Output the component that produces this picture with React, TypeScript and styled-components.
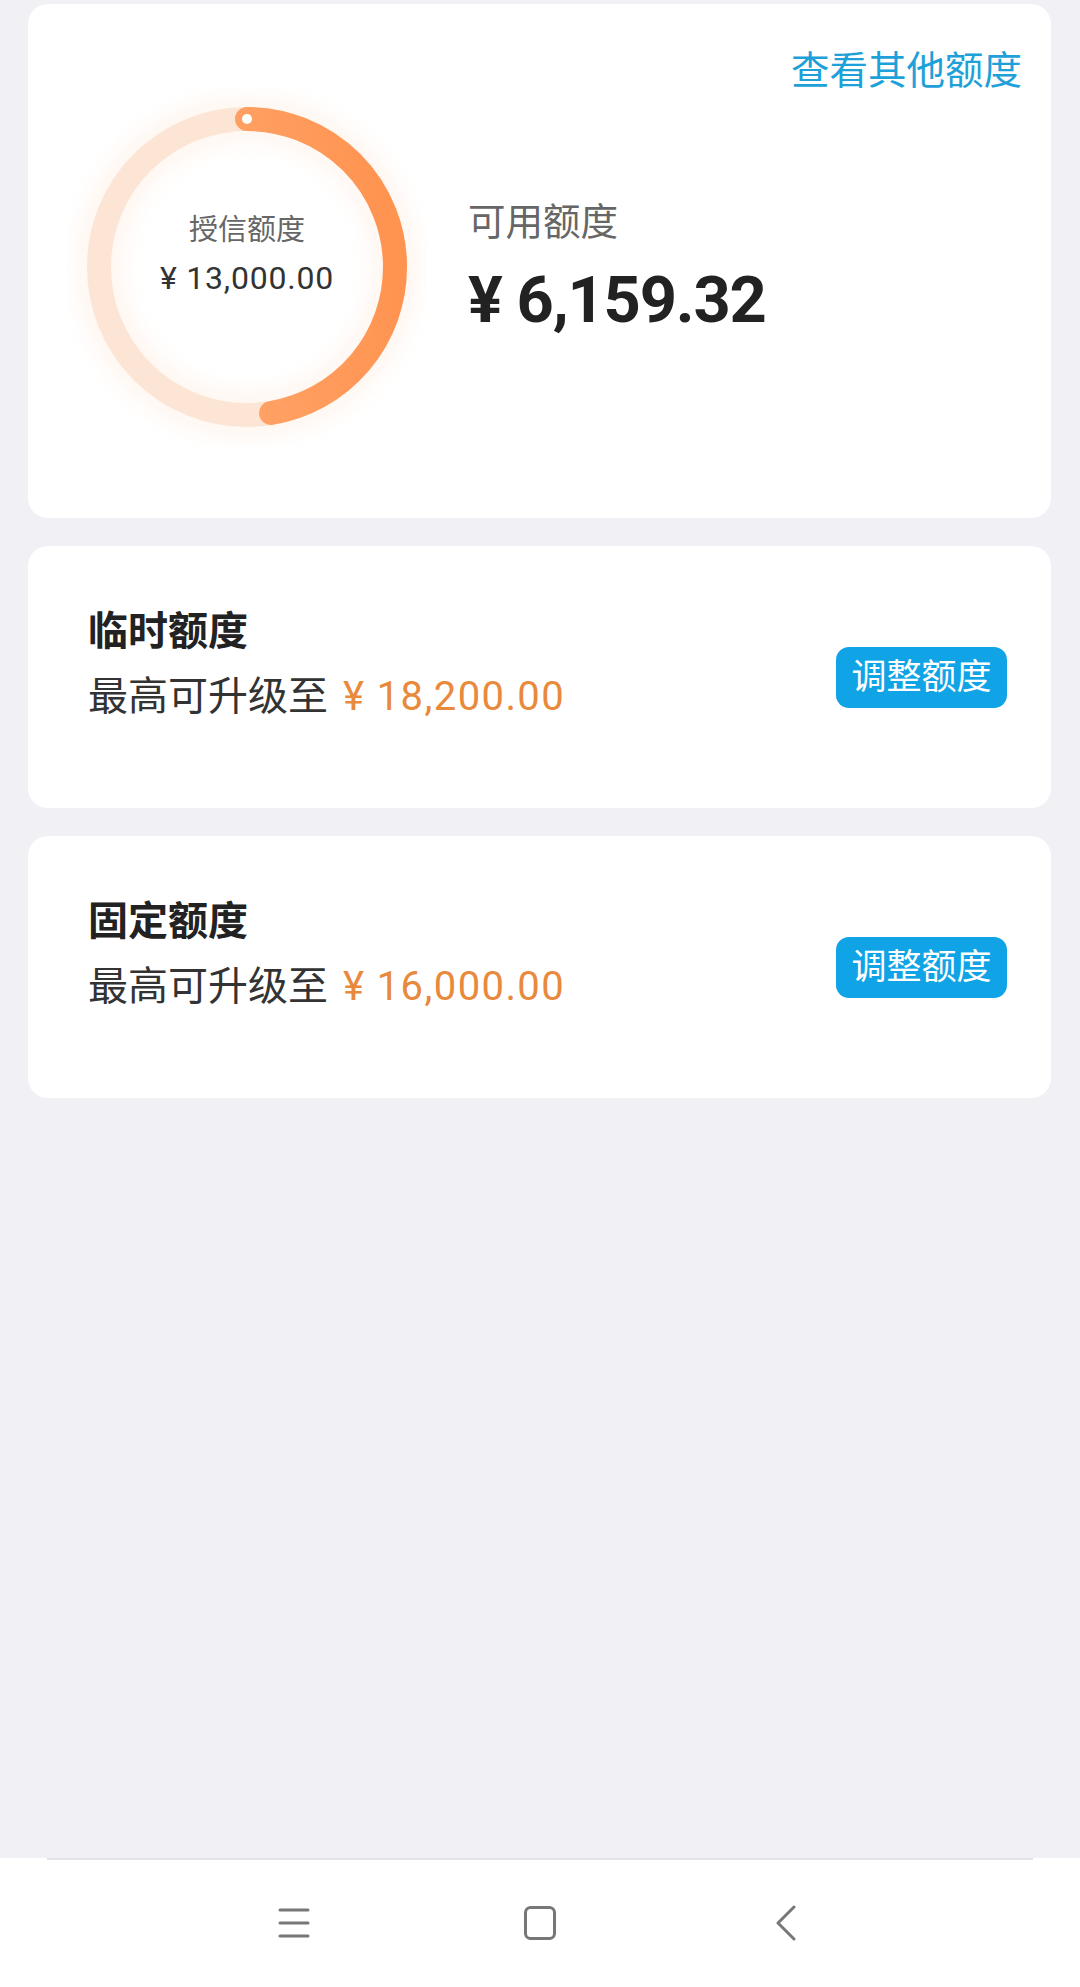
import React from "react";
import styled, { createGlobalStyle } from "styled-components";

const GlobalStyle = createGlobalStyle`
  html, body {
    margin: 0;
    padding: 0;
    background: #f0f0f5;
  }
  body {
    font-family: Roboto, "Noto Sans CJK SC", "Noto Sans", sans-serif;
    -webkit-font-smoothing: antialiased;
  }
  * { box-sizing: border-box; }
`;

const Screen = styled.div`
  min-height: 1987px;
  display: flex;
  flex-direction: column;
  background: #f0f0f5;
`;

const Main = styled.main`
  flex: 1;
  display: flex;
  flex-direction: column;
  gap: 28px;
  padding: 4px 29px 0 28px;
`;

const Card = styled.section<{ $height: number }>`
  background: #ffffff;
  border-radius: 20px;
  height: ${(p) => p.$height}px;
`;

const SummaryCard = styled(Card)`
  display: flex;
  padding: 0 29px 0 39px;
`;

const RingBox = styled.div`
  display: grid;
  width: 360px;
  height: 360px;
  margin-top: 83px;
  flex-shrink: 0;
  & > * {
    grid-area: 1 / 1;
  }
`;

const RingText = styled.div`
  display: flex;
  flex-direction: column;
  align-items: center;
  justify-content: center;
  gap: 8px;
  padding-bottom: 26px;
`;

const RingLabel = styled.div`
  font-size: 29px;
  line-height: 40px;
  color: #666;
`;

const RingAmount = styled.div`
  font-size: 32px;
  line-height: 40px;
  letter-spacing: 0.8px;
  color: #333;
`;

const SummaryInfo = styled.div`
  flex: 1;
  display: flex;
  flex-direction: column;
  margin-left: 41px;
`;

const OtherLink = styled.a`
  align-self: flex-end;
  margin-top: 41px;
  font-size: 38.5px;
  line-height: 52px;
  color: #1da1d8;
  text-decoration: none;
  cursor: pointer;
`;

const AvailLabel = styled.div`
  margin-top: 100px;
  font-size: 37.5px;
  line-height: 50px;
  color: #666;
`;

const AvailAmount = styled.div`
  margin-top: 13px;
  font-size: 65px;
  line-height: 80px;
  font-weight: 700;
  letter-spacing: -1.2px;
  color: #222;
`;

const LimitCard = styled(Card)`
  display: flex;
  align-items: center;
  justify-content: space-between;
  padding: 0 44px 0 60px;
`;

const LimitText = styled.div`
  display: flex;
  flex-direction: column;
  gap: 9px;
  margin-bottom: 26px;
`;

const LimitTitle = styled.div`
  font-size: 40px;
  line-height: 56px;
  font-weight: 700;
  color: #222;
`;

const LimitSub = styled.div`
  font-size: 40px;
  line-height: 56px;
  color: #333;
  white-space: nowrap;
`;

const Money = styled.span`
  color: #e8893b;
  margin-left: 15px;
  letter-spacing: 1.4px;
`;

const AdjustButton = styled.button`
  width: 171px;
  height: 61px;
  border: none;
  border-radius: 13px;
  background: #10a4e6;
  color: #fff;
  font-family: inherit;
  font-size: 35px;
  line-height: 61px;
  padding: 0;
  cursor: pointer;
`;

const NavBar = styled.nav`
  position: relative;
  height: 129px;
  background: #fff;
  display: grid;
  grid-template-columns: repeat(3, 246px);
  justify-content: center;
  align-items: center;
  padding-top: 1px;
  &::before {
    content: "";
    position: absolute;
    top: 0;
    left: 47px;
    right: 47px;
    height: 2px;
    background: #e4e4e8;
  }
`;

const NavSlot = styled.div`
  display: flex;
  justify-content: center;
  align-items: center;
`;

const C = 180;
const R = 148;
const CIRC = 2 * Math.PI * R;

function Ring({ used, total }: { used: number; total: number }) {
  const frac = used / total;
  const len = CIRC * frac;
  return (
    <svg width="360" height="360" viewBox="0 0 360 360">
      <defs>
        <filter id="glow" x="-30%" y="-30%" width="160%" height="160%">
          <feGaussianBlur stdDeviation="10" />
        </filter>
        <linearGradient id="prog" gradientUnits="userSpaceOnUse" x1="180" y1="30" x2="220" y2="330">
          <stop offset="0" stopColor="#ffae76" />
          <stop offset="1" stopColor="#ff9350" />
        </linearGradient>
      </defs>
      <circle cx={C} cy={C} r={R} fill="none" stroke="#ffe2cf" strokeWidth="46" opacity="0.3" filter="url(#glow)" />
      <circle cx={C} cy={C} r={R} fill="none" stroke="#fde5d6" strokeWidth="24" />
      <circle
        cx={C}
        cy={C}
        r={R}
        fill="none"
        stroke="url(#prog)"
        strokeWidth="24"
        strokeLinecap="round"
        strokeDasharray={`${len} ${CIRC}`}
        transform={`rotate(-90 ${C} ${C})`}
      />
      <circle cx={C} cy={C - R} r="5" fill="#fff" />
    </svg>
  );
}

const MenuIcon = () => (
  <svg width="32" height="34" viewBox="0 0 32 34">
    <g stroke="#777" strokeWidth="3" strokeLinecap="round">
      <line x1="2" y1="4" x2="30" y2="4" />
      <line x1="2" y1="17" x2="30" y2="17" />
      <line x1="2" y1="30" x2="30" y2="30" />
    </g>
  </svg>
);

const HomeIcon = () => (
  <svg width="34" height="36" viewBox="0 0 34 36">
    <rect x="2.5" y="2.5" width="29" height="31" rx="5" fill="none" stroke="#777" strokeWidth="3" />
  </svg>
);

const BackIcon = () => (
  <svg width="22" height="36" viewBox="0 0 22 36">
    <polyline points="19,2 3,18 19,34" fill="none" stroke="#777" strokeWidth="3" strokeLinecap="round" strokeLinejoin="round" />
  </svg>
);

const limits = [
  { title: "临时额度", amount: "¥ 18,200.00" },
  { title: "固定额度", amount: "¥ 16,000.00" },
];

export default function App() {
  return (
    <>
      <GlobalStyle />
      <Screen>
        <Main>
          <SummaryCard $height={514}>
            <RingBox>
              <Ring used={6159.32} total={13000} />
              <RingText>
                <RingLabel>授信额度</RingLabel>
                <RingAmount>¥ 13,000.00</RingAmount>
              </RingText>
            </RingBox>
            <SummaryInfo>
              <OtherLink>查看其他额度</OtherLink>
              <AvailLabel>可用额度</AvailLabel>
              <AvailAmount>¥ 6,159.32</AvailAmount>
            </SummaryInfo>
          </SummaryCard>
          {limits.map((l) => (
            <LimitCard $height={262} key={l.title}>
              <LimitText>
                <LimitTitle>{l.title}</LimitTitle>
                <LimitSub>
                  最高可升级至<Money>{l.amount}</Money>
                </LimitSub>
              </LimitText>
              <AdjustButton>调整额度</AdjustButton>
            </LimitCard>
          ))}
        </Main>
        <NavBar>
          <NavSlot>
            <MenuIcon />
          </NavSlot>
          <NavSlot>
            <HomeIcon />
          </NavSlot>
          <NavSlot>
            <BackIcon />
          </NavSlot>
        </NavBar>
      </Screen>
    </>
  );
}
